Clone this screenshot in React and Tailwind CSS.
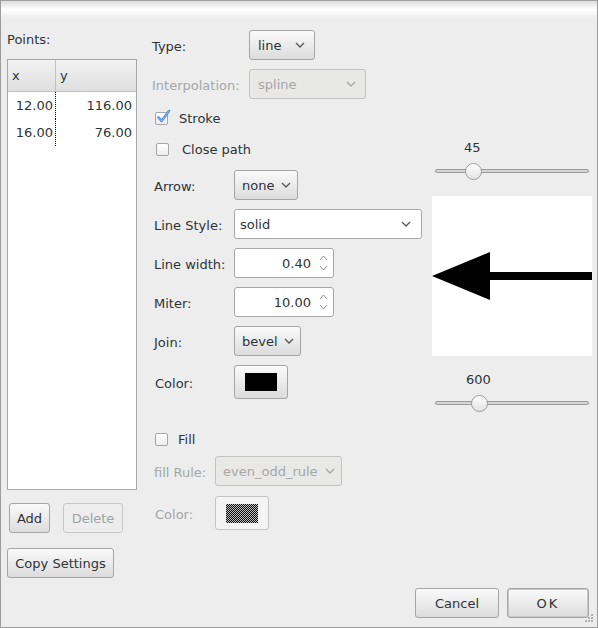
import React from 'react';

const FONT = { fontFamily: '"DejaVu Sans", "Noto Sans", sans-serif' };

function Chevron({ className = 'text-[#555753]' }) {
  return (
    <svg width="10" height="6" viewBox="0 0 10 6" className={className}>
      <path d="M1 1l4 4 4-4" fill="none" stroke="currentColor" strokeWidth="1.3" />
    </svg>
  );
}

function Dropdown({ value, width, disabled = false, tight = false }) {
  const base = disabled
    ? 'bg-[#e8e8e7] border-[#c2c2c2] text-[#a5a7a7]'
    : 'bg-gradient-to-b from-[#fafafa] to-[#dcdcdc] border-[#a5a5a5] text-[#2e3436]';
  const pad = tight ? 'pl-[7px] pr-[6px] gap-[4px]' : 'pl-[8px] pr-[9px]';
  return (
    <div
      className={`h-[30px] flex items-center justify-between border rounded-[3px] ${pad} ${base}`}
      style={{ width }}
    >
      <span className="whitespace-nowrap pt-[1px]">{value}</span>
      <Chevron className={disabled ? 'text-[#a5a7a7] shrink-0' : 'text-[#555753] shrink-0'} />
    </div>
  );
}

function Spin({ value }) {
  return (
    <div className="w-[100px] h-[30px] flex items-center bg-white border border-[#a8a8a8] rounded-[3px] pr-[5px]">
      <span className="flex-1 text-right pr-[8px] pt-[1px]">{value}</span>
      <svg width="9" height="20" viewBox="0 0 9 20" className="text-[#8c8c8c]">
        <path d="M1 7l3.5-4 3.5 4M1 13l3.5 4 3.5-4" fill="none" stroke="currentColor" strokeWidth="1" />
      </svg>
    </div>
  );
}

function Check({ checked = false }) {
  return (
    <div className="relative w-[13px] h-[13px] rounded-[2px] border border-[#a6a6a6] bg-gradient-to-b from-white to-[#ececec] shrink-0">
      {checked && (
        <svg width="16" height="15" viewBox="0 0 16 15" className="absolute left-[0px] top-[-4px]">
          <path d="M2.5 8.5l3 3.5 7.5-10" fill="none" stroke="#4a90d9" strokeWidth="2.6" strokeLinecap="round" strokeLinejoin="round" />
          <path d="M2.5 8.5l3 3.5 7.5-10" fill="none" stroke="#9cc3ec" strokeWidth="0.8" strokeLinecap="round" />
        </svg>
      )}
    </div>
  );
}

function Button({ children, className = '', disabled = false }) {
  const base = disabled
    ? 'bg-[#ededed] border-[#c8c8c8] text-[#a0a3a3]'
    : 'bg-gradient-to-b from-[#fafafa] to-[#dcdcdc] border-[#a5a5a5] text-[#2e3436]';
  return (
    <div className={`h-[30px] flex items-center justify-center border rounded-[3px] pt-[2px] ${base} ${className}`}>
      {children}
    </div>
  );
}

function Slider({ knob }) {
  return (
    <div className="relative h-[20px] mx-[3px] flex items-center">
      <div className="w-full h-[4px] rounded-full border border-[#9a9a9a] bg-[#d6d6d6]" />
      <div
        className="absolute top-[2px] w-[17px] h-[17px] rounded-full border border-[#9b9b9b] bg-gradient-to-b from-white to-[#e2e2e2]"
        style={{ left: knob - 8.5 }}
      />
    </div>
  );
}

function FormRow({ label, labelWidth, labelClass = '', children, className = '' }) {
  return (
    <div className={`flex items-center ${className}`}>
      <span className={`shrink-0 pt-[3px] ${labelClass}`} style={{ width: labelWidth }}>{label}</span>
      {children}
    </div>
  );
}

export default function App() {
  return (
    <div
      className="w-[598px] h-[628px] bg-[#ededed] border-x border-b border-[#9c9c9c] flex flex-col text-[13px] text-[#2e3436] overflow-hidden"
      style={FONT}
    >
      {/* title strip */}
      <div className="h-[18px] shrink-0 border-t border-[#a0a0a0] bg-gradient-to-b from-[#dcdcdc] via-white to-[#ededed]" />

      <div className="flex h-[562px] shrink-0">
        {/* ── Points column ── */}
        <div className="w-[130px] ml-[6px] flex flex-col">
          <div className="mt-[13px] h-[17px] leading-[17px]">Points:</div>
          <div className="mt-[11px] h-[431px] bg-white border border-[#a8a8a8]">
            <div className="flex h-[32px] bg-gradient-to-b from-[#f2f2f2] to-[#dfdfdf] border-b border-[#c2c2c2]">
              <div className="w-[48px] pl-[4px] flex items-center border-r border-[#c2c2c2]">x</div>
              <div className="flex-1 pl-[4px] flex items-center">y</div>
            </div>
            {[['12.00', '116.00'], ['16.00', '76.00']].map(([x, y]) => (
              <div key={x} className="flex h-[27px]">
                <div className="w-[48px] pr-[2px] flex items-center justify-end border-r border-dotted border-[#000]">{x}</div>
                <div className="flex-1 pr-[4px] flex items-center justify-end">{y}</div>
              </div>
            ))}
          </div>
          <div className="mt-[13px] flex">
            <Button className="ml-[2px] w-[41px]">Add</Button>
            <Button className="ml-[13px] w-[60px]" disabled>Delete</Button>
          </div>
          <Button className="mt-[15px] w-[107px]">Copy Settings</Button>
        </div>

        {/* ── Settings column ── */}
        <div className="w-[271px] ml-[15px] mt-[12px] flex flex-col">
          <FormRow label="Type:" labelWidth={97}>
            <Dropdown value="line" width={66} />
          </FormRow>
          <FormRow label="Interpolation:" labelWidth={97} labelClass="text-[#a5a7a7]" className="mt-[9px]">
            <Dropdown value="spline" width={117} disabled />
          </FormRow>
          <div className="mt-[7px] h-[24px] flex items-center pl-[3px]">
            <Check checked />
            <span className="ml-[11px] pt-[2px]">Stroke</span>
          </div>
          <div className="mt-[7px] h-[24px] flex items-center pl-[4px]">
            <Check />
            <span className="ml-[13px] pt-[2px]">Close path</span>
          </div>

          <div className="pl-[2px] flex flex-col">
            <FormRow label="Arrow:" labelWidth={80} className="mt-[9px]">
              <Dropdown value="none" width={64} tight />
            </FormRow>
            <FormRow label="Line Style:" labelWidth={80} className="mt-[9px]">
              <div className="w-[188px] h-[30px] flex items-center justify-between bg-white border border-[#a8a8a8] rounded-[3px] pl-[5px] pr-[10px]">
                <span className="pt-[1px]">solid</span>
                <Chevron />
              </div>
            </FormRow>
            <FormRow label="Line width:" labelWidth={80} className="mt-[9px]">
              <Spin value="0.40" />
            </FormRow>
            <FormRow label="Miter:" labelWidth={80} className="mt-[9px]">
              <Spin value="10.00" />
            </FormRow>
            <FormRow label="Join:" labelWidth={80} className="mt-[9px]">
              <Dropdown value="bevel" width={67} tight />
            </FormRow>
            <FormRow label="Color:" labelWidth={80} labelClass="pl-[1px]" className="mt-[9px]">
              <Button className="w-[54px] h-[34px] !pt-0">
                <div className="w-[32px] h-[18px] bg-black" />
              </Button>
            </FormRow>
          </div>

          <div className="mt-[28px] h-[24px] flex items-center pl-[3px]">
            <Check />
            <span className="ml-[10px] pt-[2px]">Fill</span>
          </div>
          <div className="pl-[2px] flex flex-col text-[#a5a7a7]">
            <FormRow label="fill Rule:" labelWidth={61} className="mt-[5px]">
              <Dropdown value="even_odd_rule" width={127} disabled tight />
            </FormRow>
            <FormRow label="Color:" labelWidth={61} labelClass="pl-[1px]" className="mt-[10px]">
              <div className="w-[54px] h-[34px] flex items-center justify-center bg-[#f4f4f4] border border-[#c4c4c4] rounded-[3px]">
                <div className="w-[32px] h-[19px] bg-[repeating-conic-gradient(#111_0_25%,#bbb_0_50%)] bg-[length:2px_2px]" />
              </div>
            </FormRow>
          </div>
        </div>

        {/* ── Preview column ── */}
        <div className="w-[160px] ml-[9px] flex flex-col">
          <div className="mt-[121px] h-[17px] leading-[17px] pl-[32px]">45</div>
          <div className="mt-[5px]"><Slider knob={38} /></div>
          <div className="mt-[15px] h-[160px] bg-white">
            <svg width="160" height="160" viewBox="0 0 160 160">
              <rect x="57" y="76" width="103" height="8" fill="#000" />
              <polygon points="0,80 58,56 58,104" fill="#000" />
            </svg>
          </div>
          <div className="mt-[15px] h-[17px] leading-[17px] pl-[34px]">600</div>
          <div className="mt-[5px]"><Slider knob={44} /></div>
        </div>
      </div>

      {/* ── Dialog actions ── */}
      <div className="relative flex-1 flex justify-end items-start pt-[8px] pr-[8px]">
        <Button className="w-[84px]">Cancel</Button>
        <Button className="ml-[8px] w-[82px] border-[#7f7f7f] shadow-[inset_0_0_0_1px_#c8c8c8] tracking-[2px]">OK</Button>
        <svg width="10" height="10" viewBox="0 0 10 10" className="absolute right-[3px] bottom-[4px]">
          {[[8, 2], [5, 5], [8, 5], [2, 8], [5, 8], [8, 8]].map(([cx, cy]) => (
            <rect key={`${cx}-${cy}`} x={cx - 1} y={cy - 1} width="2" height="2" fill="#b0b0b0" />
          ))}
        </svg>
      </div>
    </div>
  );
}
